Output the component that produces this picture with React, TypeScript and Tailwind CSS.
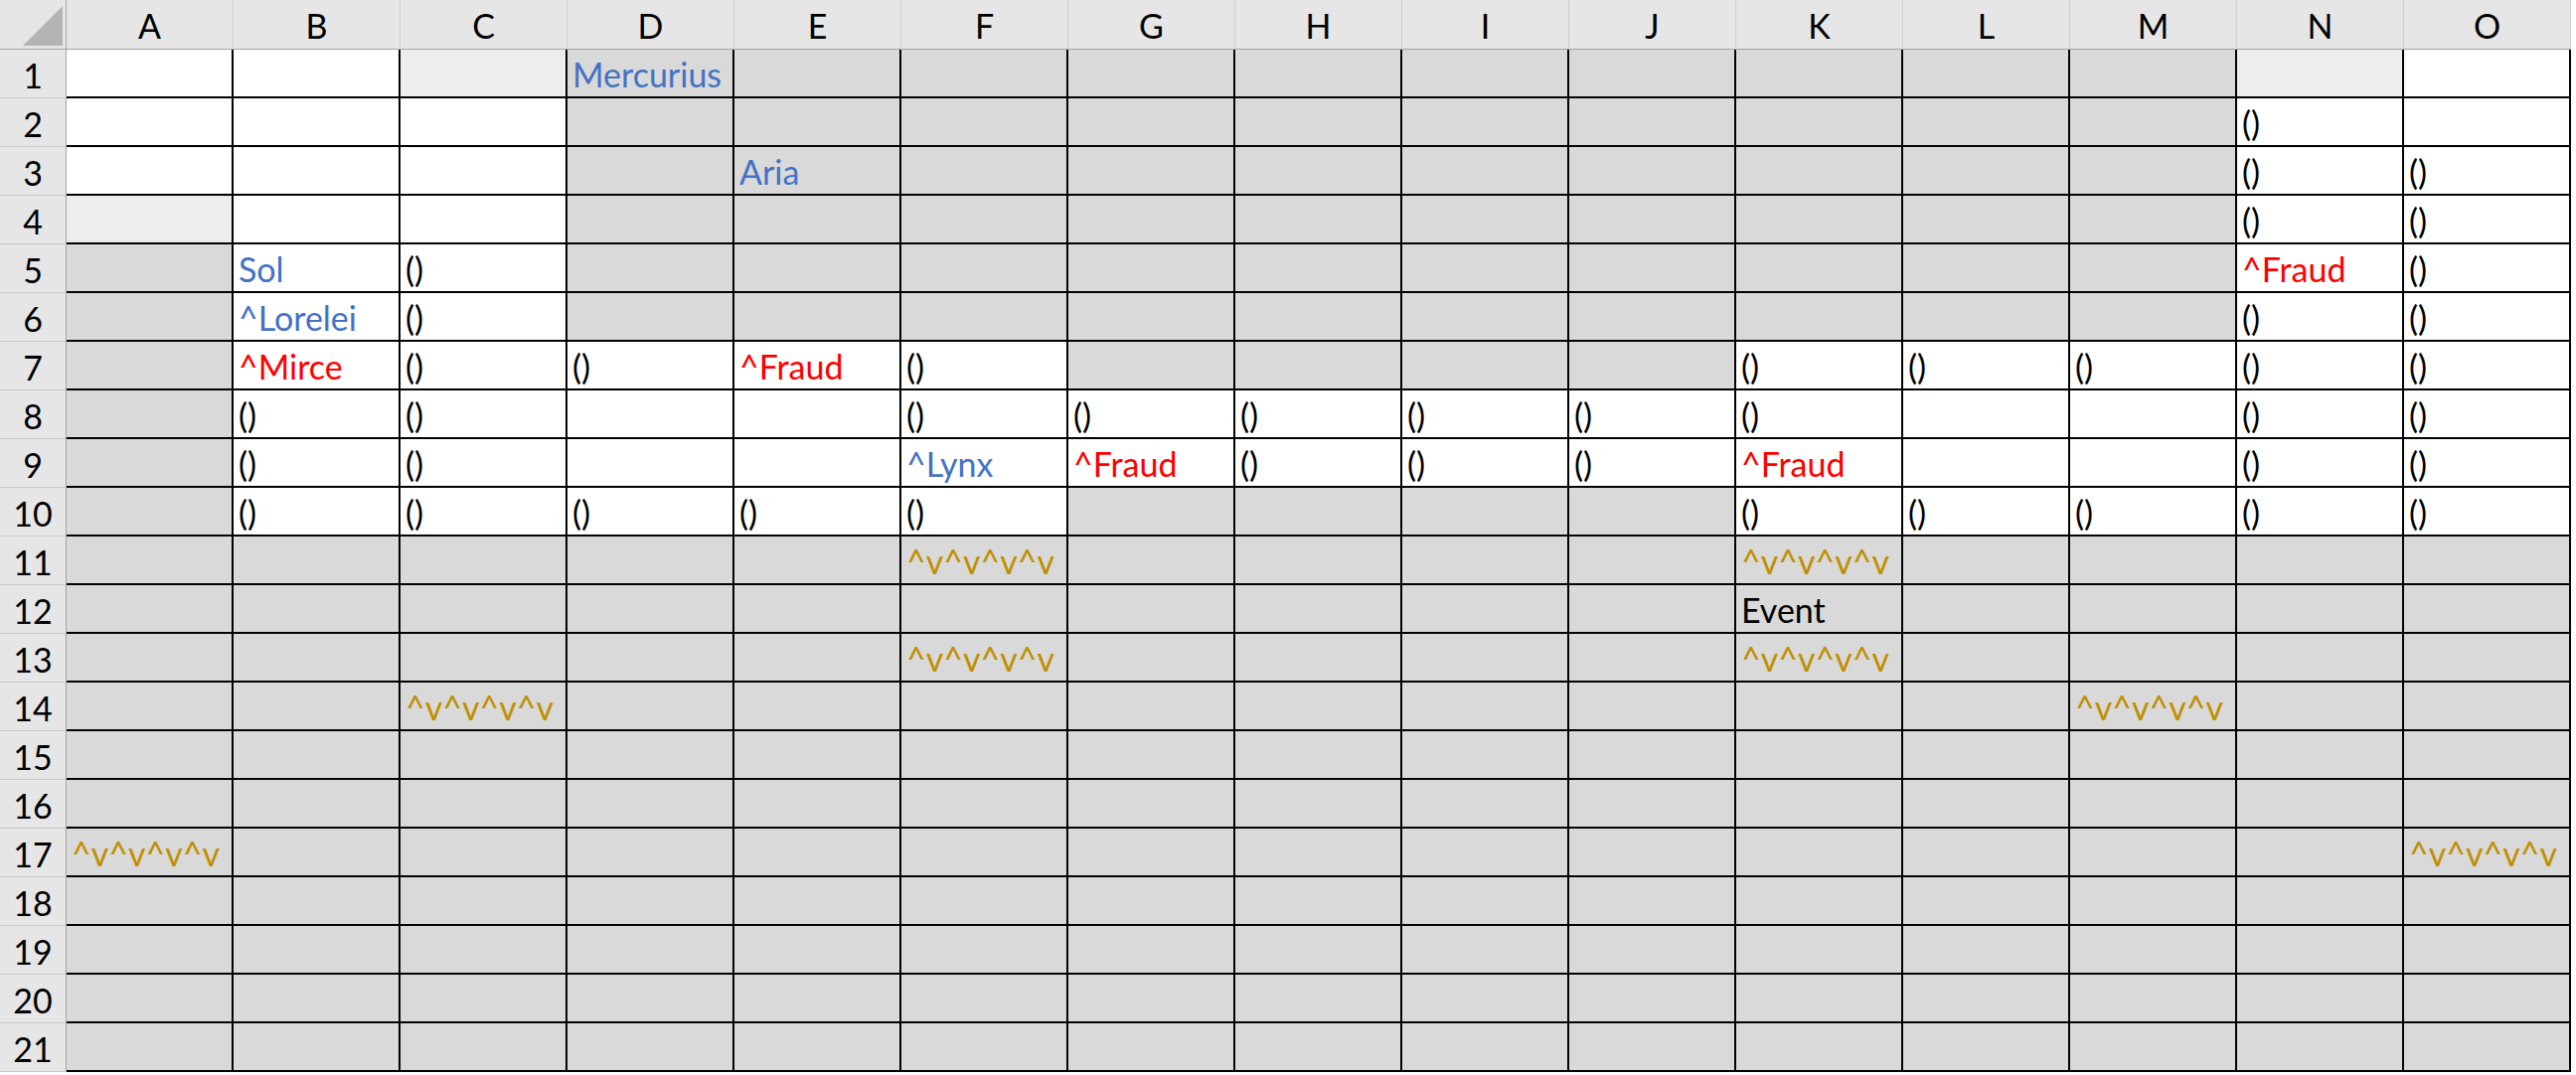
import React from 'react';

const COLS = ['A', 'B', 'C', 'D', 'E', 'F', 'G', 'H', 'I', 'J', 'K', 'L', 'M', 'N', 'O'];

// w = white, g = gray, l = light gray
const FILLS: string[] = [
  'wwlggggggggggl w',
  'wwwggggggggggww',
  'wwwggggggggggww',
  'lwwggggggggggww',
  'gwwggggggggggww',
  'gwwggggggggggww',
  'gwwwwwggggwwwww',
  'gwwwwwwwwwwwwww',
  'gwwwwwwwwwwwwww',
  'gwwwwwggggwwwww',
].map((r) => r.replace(/ /g, ''));

type Tone = 'blue' | 'red' | 'gold' | 'black';

const P: [string, Tone] = ['()', 'black'];
const WAVE: [string, Tone] = ['^v^v^v^v', 'gold'];
const FRAUD: [string, Tone] = ['^Fraud', 'red'];

const TEXT: Record<string, [string, Tone]> = {
  D1: ['Mercurius', 'blue'],
  N2: P,
  E3: ['Aria', 'blue'], N3: P, O3: P,
  N4: P, O4: P,
  B5: ['Sol', 'blue'], C5: P, N5: FRAUD, O5: P,
  B6: ['^Lorelei', 'blue'], C6: P, N6: P, O6: P,
  B7: ['^Mirce', 'red'], C7: P, D7: P, E7: FRAUD, F7: P, K7: P, L7: P, M7: P, N7: P, O7: P,
  B8: P, C8: P, F8: P, G8: P, H8: P, I8: P, J8: P, K8: P, N8: P, O8: P,
  B9: P, C9: P, F9: ['^Lynx', 'blue'], G9: FRAUD, H9: P, I9: P, J9: P, K9: FRAUD, N9: P, O9: P,
  B10: P, C10: P, D10: P, E10: P, F10: P, K10: P, L10: P, M10: P, N10: P, O10: P,
  F11: WAVE, K11: WAVE,
  K12: ['Event', 'black'],
  F13: WAVE, K13: WAVE,
  C14: WAVE, M14: WAVE,
  A17: WAVE, O17: WAVE,
};

const toneClass: Record<Tone, string> = {
  blue: 'text-[#4472c4]',
  red: 'text-[#ff0000]',
  gold: 'text-[#bf8f00]',
  black: 'text-black',
};

const fillClass: Record<string, string> = {
  w: 'bg-white',
  g: 'bg-[#d9d9d9]',
  l: 'bg-[#ededed]',
};

const App: React.FC = () => {
  const rows = Array.from({ length: 21 }, (_, i) => i + 1);

  return (
    <div className="w-[2592px] h-[1082px] bg-white overflow-hidden font-['Lato','Open_Sans',sans-serif]">
      <div className="grid grid-cols-[67px_repeat(15,168px)] grid-rows-[50px_repeat(21,49px)]">
        <div className="bg-[#e6e6e6] border-r border-b border-[#a3a3a3] flex items-end justify-end pr-[3px] pb-[3px]">
          <svg width="40" height="40" viewBox="0 0 40 40">
            <polygon points="40,0 40,40 0,40" fill="#b4b4b4" />
          </svg>
        </div>
        {COLS.map((c) => (
          <div
            key={c}
            className="bg-[#e6e6e6] border-r border-[#cfcfcf] border-b-1 border-b-[#a3a3a3] flex items-center justify-center text-[34px] leading-none text-black pt-[2px]"
          >
            {c}
          </div>
        ))}

        {rows.map((r) => (
          <React.Fragment key={r}>
            <div className="bg-[#e6e6e6] border-r border-r-[#a3a3a3] border-b border-b-[#c8c8c8] flex items-end justify-center pb-[5px] text-[34px] leading-none text-black">
              {r}
            </div>
            {COLS.map((c, ci) => {
              const fill = r <= 10 ? FILLS[r - 1][ci] : 'g';
              const t = TEXT[`${c}${r}`];
              return (
                <div
                  key={c}
                  className={`${fillClass[fill]} border-r-2 border-b-2 border-black flex items-end pl-[5px] pb-[5px] overflow-hidden whitespace-nowrap text-[34px] leading-none`}
                >
                  {t && <span className={toneClass[t[1]]}>{t[0]}</span>}
                </div>
              );
            })}
          </React.Fragment>
        ))}
      </div>
    </div>
  );
};

export default App;
